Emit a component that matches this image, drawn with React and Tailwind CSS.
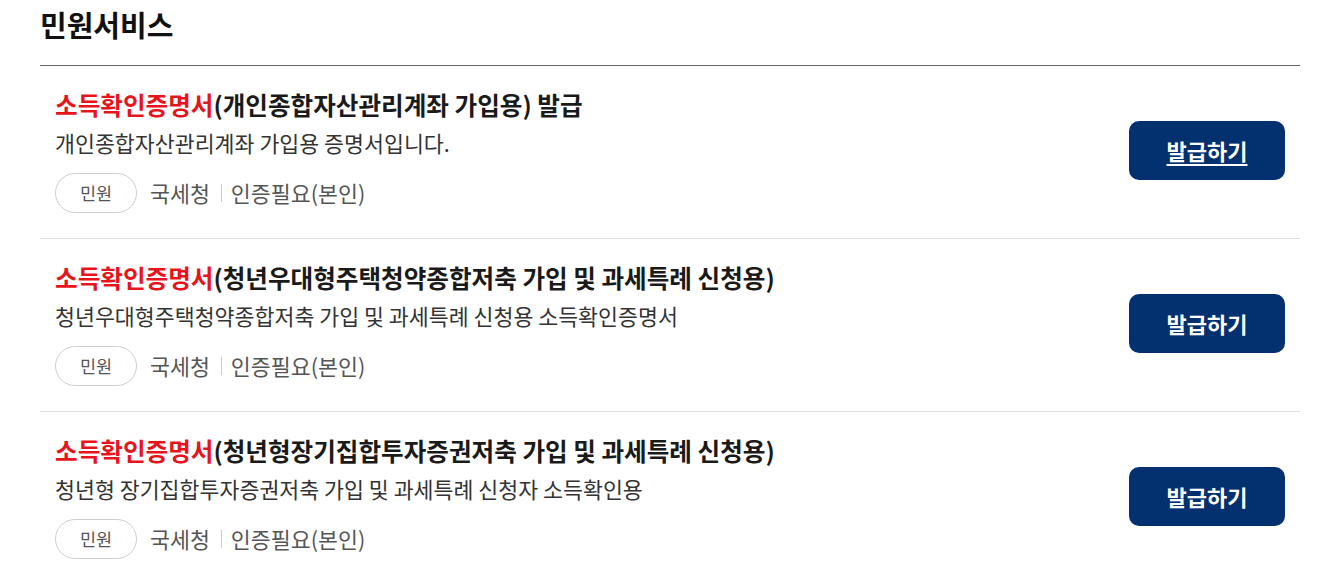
import React from "react";

const services = [
  {
    name: "(개인종합자산관리계좌 가입용) 발급",
    desc: "개인종합자산관리계좌 가입용 증명서입니다.",
    focused: true,
  },
  {
    name: "(청년우대형주택청약종합저축 가입 및 과세특례 신청용)",
    desc: "청년우대형주택청약종합저축 가입 및 과세특례 신청용 소득확인증명서",
  },
  {
    name: "(청년형장기집합투자증권저축 가입 및 과세특례 신청용)",
    desc: "청년형 장기집합투자증권저축 가입 및 과세특례 신청자 소득확인용",
  },
];

function ServiceItem({ item, first }) {
  return (
    <li
      className={
        "flex items-center justify-between px-[15px] pt-[21px] pb-[25px] " +
        (first ? "" : "border-t border-[#e1e1e1]")
      }
    >
      <div>
        <h3 className="text-[24.6px] leading-[34px] font-bold text-[#1a1a1a]">
          <span className="text-[#e8141c]">소득확인증명서</span>
          {item.name}
        </h3>
        <p className="mt-[7px] text-[21.7px] leading-[30px] text-[#333]">{item.desc}</p>
        <div className="mt-[15px] flex items-center text-[21.7px] text-[#555]">
          <span className="flex h-[40px] w-[82px] items-center justify-center rounded-full border border-[#cfcfcf] text-[17.5px] text-[#555]">
            민원
          </span>
          <span className="ml-[13px]">국세청</span>
          <span className="ml-[11px] mr-[9px] h-[18px] w-px bg-[#cccccc]" />
          <span>인증필요(본인)</span>
        </div>
      </div>
      <button
        className={
          "flex h-[59px] w-[156px] items-center justify-center rounded-[10px] bg-[#03306f] text-[22px] font-bold text-white " +
          (item.focused ? "underline underline-offset-[4px]" : "")
        }
      >
        발급하기
      </button>
    </li>
  );
}

export default function App() {
  return (
    <div
      className="bg-white px-[40px] pr-[22px] min-h-[571px]"
      style={{ fontFamily: '"Noto Sans CJK KR", "Noto Sans", sans-serif' }}
    >
      <h2 className="pt-[4px] text-[29px] leading-[40px] font-bold text-[#111]">민원서비스</h2>
      <ul className="mt-[21px] border-t border-[#666]">
        {services.map((s, i) => (
          <ServiceItem key={i} item={s} first={i === 0} />
        ))}
      </ul>
    </div>
  );
}
